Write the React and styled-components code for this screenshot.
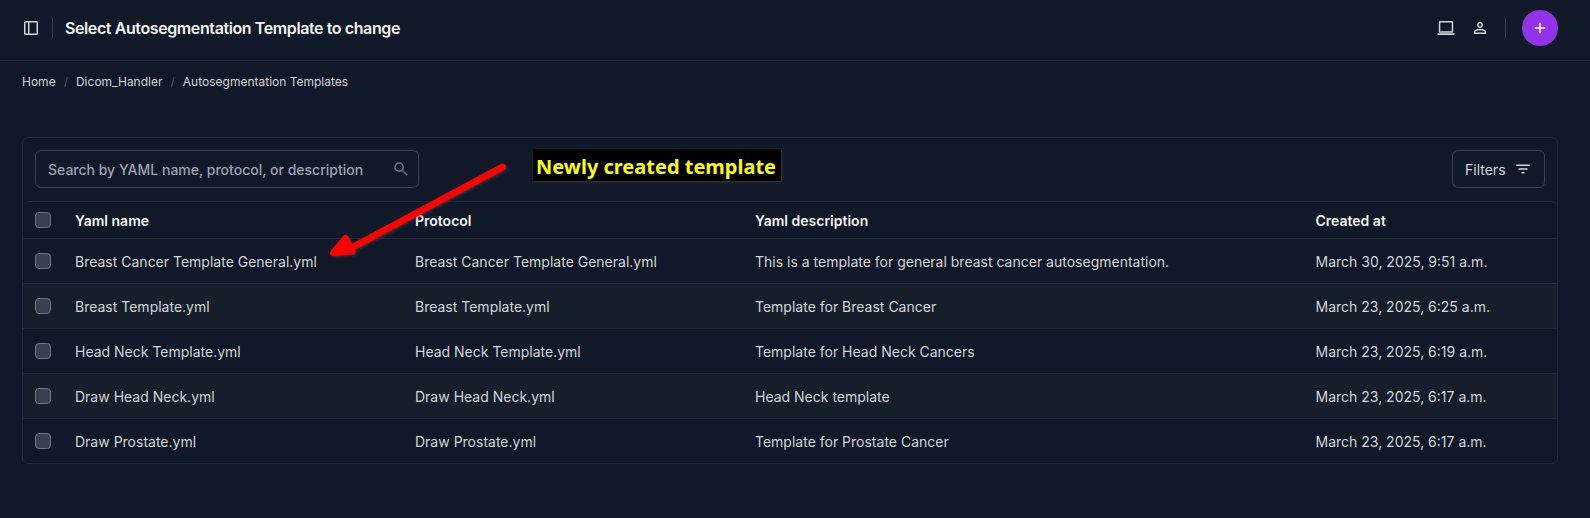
import React from "react";
import styled, { createGlobalStyle } from "styled-components";

const Global = createGlobalStyle`
  *, *::before, *::after { box-sizing: border-box; }
  body {
    margin: 0;
    background: #111827;
    color: #d1d5db;
    font-family: Inter, "Liberation Sans", sans-serif;
    font-size: 14px;
    line-height: 20px;
  }
`;

const Page = styled.div`
  position: relative;
  display: flex;
  flex-direction: column;
  height: 518px;
  overflow: hidden;
`;

const Header = styled.header`
  display: flex;
  align-items: center;
  height: 61px;
  padding: 0 32px 5px 22px;
  border-bottom: 1px solid #1f2937;
`;

const Title = styled.h1`
  margin: 0;
  font-size: 16px;
  line-height: 24px;
  font-weight: 600;
  color: #f3f4f6;
  letter-spacing: -0.025em;
`;

const Divider = styled.span`
  width: 1px;
  height: 20px;
  background: #374151;
  margin: 0 ${(p) => p.$after}px 0 ${(p) => p.$before}px;
`;

const Spacer = styled.span`
  flex: 1;
`;

const Icon = styled.svg`
  display: block;
  flex: none;
  width: ${(p) => p.$size}px;
  height: ${(p) => p.$size}px;
  fill: ${(p) => p.$color || "#d1d5db"};
`;

const IconButton = styled.button`
  display: flex;
  padding: 0;
  border: 0;
  background: none;
  margin-right: ${(p) => p.$gap || 0}px;
`;

const AddButton = styled(IconButton)`
  width: 36px;
  height: 36px;
  align-items: center;
  justify-content: center;
  border-radius: 50%;
  background: #9333ea;
`;

const Breadcrumbs = styled.nav`
  display: flex;
  padding: 12px 22px 0;
  height: 76px;
  font-size: 12px;
  line-height: 18px;
`;

const Slash = styled.span`
  margin: 0 8px;
  color: #4b5563;
`;

const Card = styled.section`
  margin: 0 32px 0 22px;
  border: 1px solid #1f2937;
  border-radius: 6px;
`;

const Toolbar = styled.div`
  display: flex;
  justify-content: space-between;
  padding: 12px;
  height: 63px;
`;

const Search = styled.label`
  display: flex;
  align-items: center;
  width: 384px;
  height: 38px;
  padding: 0 8px 0 12px;
  border: 1px solid #374151;
  border-radius: 6px;
`;

const SearchInput = styled.input`
  flex: 1;
  min-width: 0;
  padding: 2px 0 0;
  border: 0;
  outline: 0;
  background: none;
  color: #d1d5db;
  font: inherit;
  font-weight: 500;
  &::placeholder { color: #9ca3af; opacity: 1; }
`;

const FilterButton = styled.button`
  display: flex;
  align-items: center;
  justify-content: space-between;
  width: 93px;
  height: 38px;
  padding: 0 12px;
  border: 1px solid #374151;
  border-radius: 6px;
  background: none;
  color: #d1d5db;
  font: inherit;
`;

const FilterLabel = styled.span`
  padding-top: 2px;
`;

const Table = styled.div`
  border-top: 1px solid #1f2937;
  border-radius: 6px;
`;

const Row = styled.div`
  display: grid;
  grid-template-columns: 52px 340px 340px 560.5px 1fr;
  align-items: center;
  height: ${(p) => (p.$head ? 36 : 45)}px;
  border-top: ${(p) => (p.$head ? "0" : "1px solid #1f2937")};
  background: ${(p) => (p.$shaded ? "#161e2b" : "transparent")};
  color: ${(p) => (p.$head ? "#f3f4f6" : "#d1d5db")};
  font-weight: ${(p) => (p.$head ? 600 : 400)};
`;

const Cell = styled.span`
  padding-top: 1px;
  white-space: nowrap;
`;

const Checkbox = styled.input.attrs({ type: "checkbox" })`
  appearance: none;
  width: 16px;
  height: 16px;
  margin: 0 0 0 12px;
  border: 1px solid #6b7280;
  border-radius: 4px;
  background: #374151;
`;

const Note = styled.div`
  position: absolute;
  left: 533px;
  top: 149px;
  width: 248px;
  height: 32px;
  padding-left: 3px;
  background: #000;
  color: #ff0;
  font: bold 20px/35px "Noto Sans", "Open Sans", sans-serif;
  white-space: nowrap;
  box-shadow: 1px 1px 3px rgba(90, 90, 90, 0.55);
`;

const Arrow = styled.svg`
  position: absolute;
  left: 320px;
  top: 155px;
  width: 200px;
  height: 110px;
  filter: drop-shadow(1.5px 1.5px 1.5px rgba(90, 90, 90, 0.55));
`;

const templates = [
  ["Breast Cancer Template General.yml", "This is a template for general breast cancer autosegmentation.", "March 30, 2025, 9:51 a.m."],
  ["Breast Template.yml", "Template for Breast Cancer", "March 23, 2025, 6:25 a.m."],
  ["Head Neck Template.yml", "Template for Head Neck Cancers", "March 23, 2025, 6:19 a.m."],
  ["Draw Head Neck.yml", "Head Neck template", "March 23, 2025, 6:17 a.m."],
  ["Draw Prostate.yml", "Template for Prostate Cancer", "March 23, 2025, 6:17 a.m."],
];

export default function App() {
  return (
    <Page>
      <Global />
      <Header>
        <IconButton aria-label="Toggle sidebar">
          <Icon $size={18} viewBox="0 0 18 18">
            <path fillRule="evenodd" d="M3.500 2h11a1.500 1.500 0 0 1 1.500 1.500v11a1.500 1.500 0 0 1-1.500 1.500h-11a1.500 1.500 0 0 1-1.500-1.500v-11a1.500 1.500 0 0 1 1.500-1.500ZM3.500 3.500v11h2.500v-11ZM7.500 3.500v11h7v-11Z" />
          </Icon>
        </IconButton>
        <Divider $before={12} $after={12} />
        <Title>Select Autosegmentation Template to change</Title>
        <Spacer />
        <IconButton $gap={16} aria-label="Theme">
          <Icon $size={18} viewBox="0 0 18 18">
            <path fillRule="evenodd" d="M.5 14.300h17V16H.5ZM3 2h12a1.200 1.200 0 0 1 1.200 1.200v9.300a1.200 1.200 0 0 1-1.200 1.200H3a1.200 1.200 0 0 1-1.200-1.200V3.200A1.200 1.200 0 0 1 3 2ZM3.300 3.500v8.700h11.400V3.500Z" />
          </Icon>
        </IconButton>
        <IconButton aria-label="Account">
          <Icon $size={18} viewBox="0 -960 960 960">
            <path d="M480-480q-66 0-113-47t-47-113q0-66 47-113t113-47q66 0 113 47t47 113q0 66-47 113t-113 47ZM160-160v-112q0-34 17.500-62.500T224-378q62-31 126-46.500T480-440q66 0 130 15.500T736-378q29 15 46.500 43.500T800-272v112H160Zm80-80h480v-32q0-11-5.500-20T700-306q-54-27-109-40.500T480-360q-56 0-111 13.500T260-306q-9 5-14.500 14t-5.500 20v32Zm240-320q33 0 56.500-23.500T560-640q0-33-23.500-56.500T480-720q-33 0-56.500 23.500T400-640q0 33 23.500 56.500T480-560Z" />
          </Icon>
        </IconButton>
        <Divider $before={16} $after={16} />
        <AddButton aria-label="Add">
          <Icon $size={18} $color="#fff" viewBox="0 -960 960 960">
            <path d="M440-440H200v-80h240v-240h80v240h240v80H520v240h-80v-240Z" />
          </Icon>
        </AddButton>
      </Header>
      <Breadcrumbs>
        <span>Home</span>
        <Slash>/</Slash>
        <span>Dicom_Handler</span>
        <Slash>/</Slash>
        <span>Autosegmentation Templates</span>
      </Breadcrumbs>
      <Card>
        <Toolbar>
          <Search>
            <SearchInput placeholder="Search by YAML name, protocol, or description" />
            <Icon $size={18} $color="#6b7280" viewBox="0 -960 960 960">
              <path d="M784-120 532-372q-30 24-69 38t-83 14q-109 0-184.500-75.500T120-580q0-109 75.500-184.500T380-840q109 0 184.500 75.500T640-580q0 44-14 83t-38 69l252 252-56 56ZM380-400q75 0 127.500-52.500T560-580q0-75-52.500-127.500T380-760q-75 0-127.500 52.500T200-580q0 75 52.500 127.500T380-400Z" />
            </Icon>
          </Search>
          <FilterButton>
            <FilterLabel>Filters</FilterLabel>
            <Icon $size={18} viewBox="0 -960 960 960">
              <path d="M400-240v-80h160v80H400ZM240-440v-80h480v80H240ZM120-640v-80h720v80H120Z" />
            </Icon>
          </FilterButton>
        </Toolbar>
        <Table>
          <Row $head>
            <Checkbox />
            <Cell>Yaml name</Cell>
            <Cell>Protocol</Cell>
            <Cell>Yaml description</Cell>
            <Cell>Created at</Cell>
          </Row>
          {templates.map(([name, description, created], i) => (
            <Row key={name} $shaded={i % 2 === 1}>
              <Checkbox />
              <Cell>{name}</Cell>
              <Cell>{name}</Cell>
              <Cell>{description}</Cell>
              <Cell>{created}</Cell>
            </Row>
          ))}
        </Table>
      </Card>
      <Note>Newly created template</Note>
      <Arrow viewBox="320 155 200 110">
        <path d="M502.500 167 L355 246" stroke="#f00" strokeWidth="6.600" strokeLinecap="round" />
        <path d="M333 253 L345.500 238 L352.500 251.500 Z" fill="#f00" stroke="#f00" strokeWidth="6" strokeLinejoin="round" />
      </Arrow>
    </Page>
  );
}
